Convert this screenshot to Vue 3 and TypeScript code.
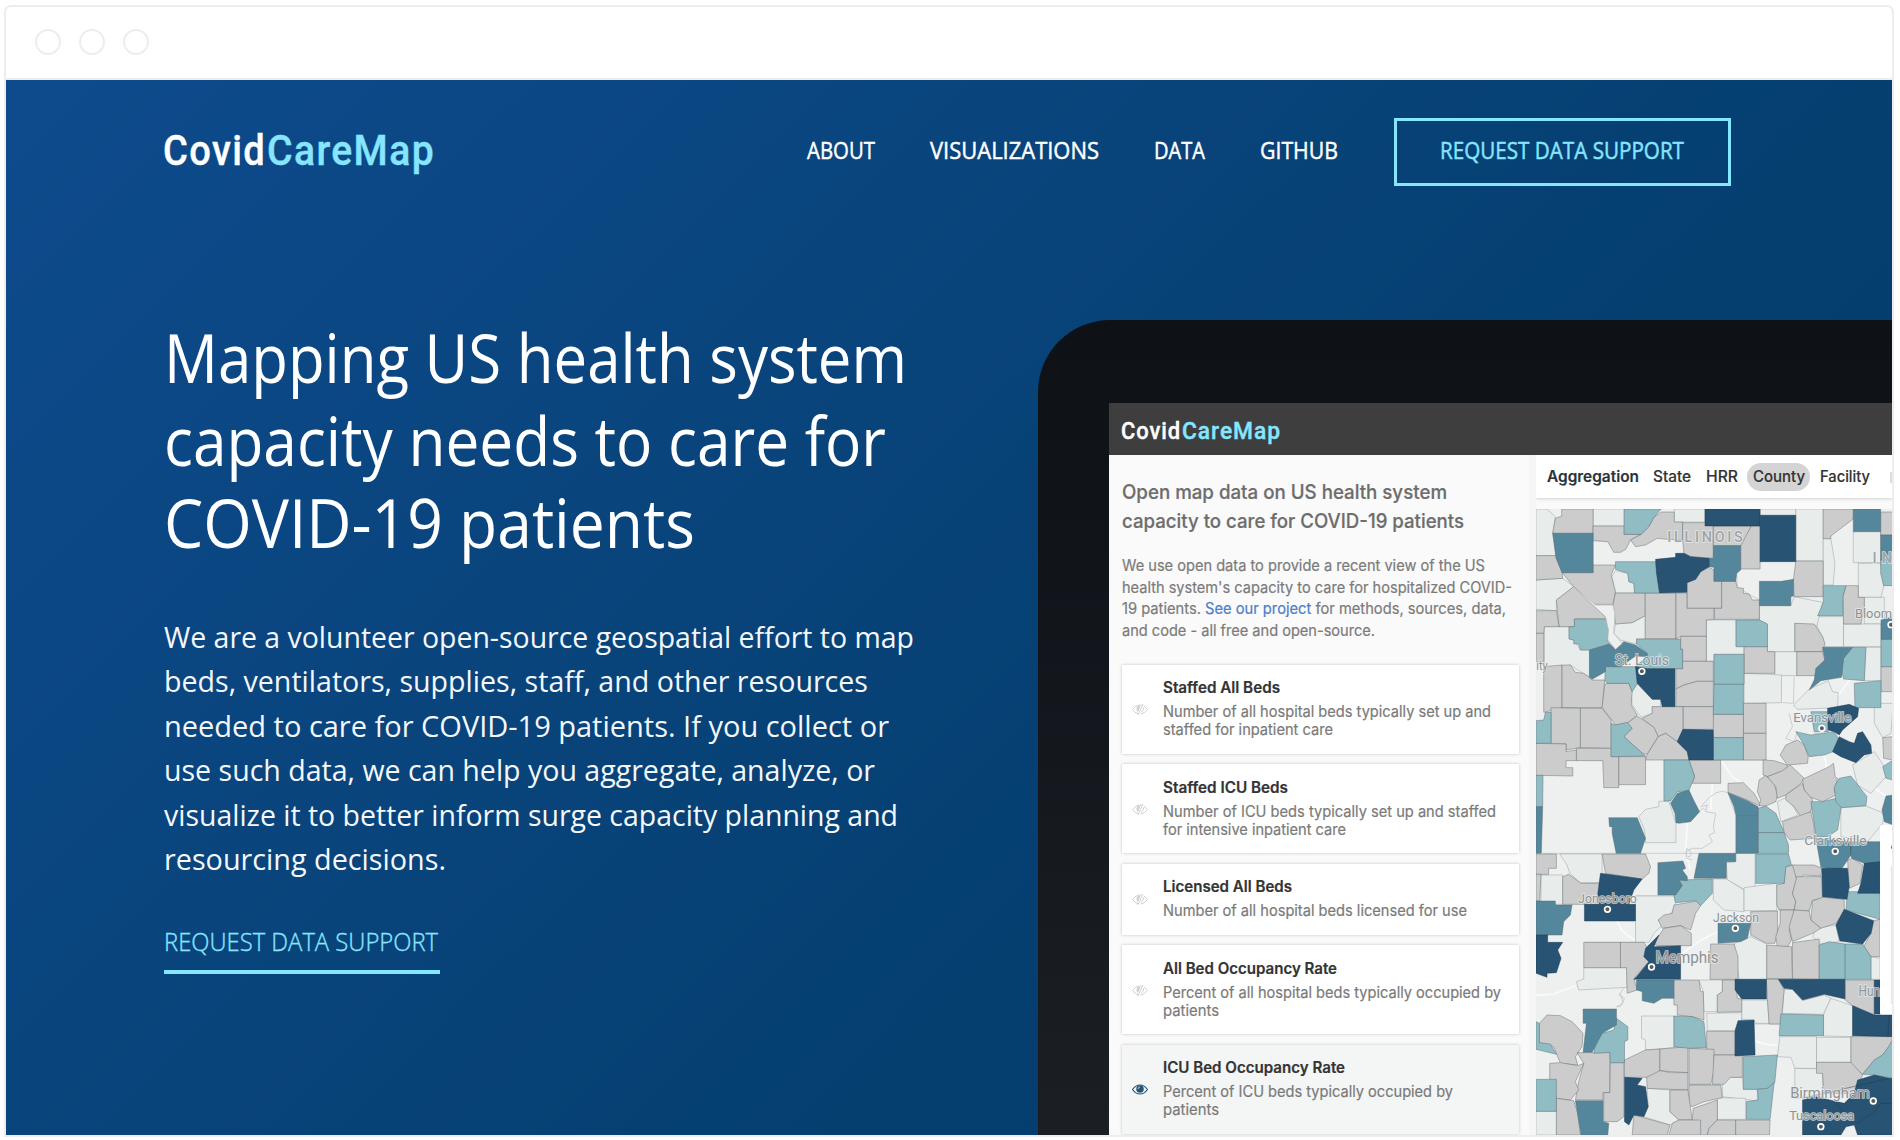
<script setup lang="ts">
import type { Directive } from 'vue'

/** Condenses or widens a run of text so that it occupies the given width in pixels. */
const vFit: Directive<HTMLElement, number> = {
  mounted(el, { value }) {
    const natural = el.getBoundingClientRect().width
    el.style.width = `${value}px`
    el.style.transform = `scaleX(${value / natural})`
  },
}

interface Line { text: string; width: number }
interface Metric { title: Line; lines: Line[]; active?: boolean }

const nav: Line[] = [
  { text: 'ABOUT', width: 68 },
  { text: 'VISUALIZATIONS', width: 169 },
  { text: 'DATA', width: 51 },
  { text: 'GITHUB', width: 78 },
]

const headline: Line[] = [
  { text: 'Mapping US health system', width: 743 },
  { text: 'capacity needs to care for', width: 722 },
  { text: 'COVID-19 patients', width: 531 },
]

const intro: Line[] = [
  { text: 'We are a volunteer open-source geospatial effort to map', width: 750 },
  { text: 'beds, ventilators, supplies, staff, and other resources', width: 704 },
  { text: 'needed to care for COVID-19 patients. If you collect or', width: 725 },
  { text: 'use such data, we can help you aggregate, analyze, or', width: 711 },
  { text: 'visualize it to better inform surge capacity planning and', width: 734 },
  { text: 'resourcing decisions.', width: 282 },
]

const metrics: Metric[] = [
  {
    title: { text: 'Staffed All Beds', width: 117 },
    lines: [
      { text: 'Number of all hospital beds typically set up and', width: 328 },
      { text: 'staffed for inpatient care', width: 170 },
    ],
  },
  {
    title: { text: 'Staffed ICU Beds', width: 125 },
    lines: [
      { text: 'Number of ICU beds typically set up and staffed', width: 333 },
      { text: 'for intensive inpatient care', width: 183 },
    ],
  },
  {
    title: { text: 'Licensed All Beds', width: 129 },
    lines: [{ text: 'Number of all hospital beds licensed for use', width: 304 }],
  },
  {
    title: { text: 'All Bed Occupancy Rate', width: 174 },
    lines: [
      { text: 'Percent of all hospital beds typically occupied by', width: 338 },
      { text: 'patients', width: 56 },
    ],
  },
  {
    title: { text: 'ICU Bed Occupancy Rate', width: 182 },
    lines: [
      { text: 'Percent of ICU beds typically occupied by', width: 290 },
      { text: 'patients', width: 56 },
    ],
    active: true,
  },
]

/* County outlines, grouped by occupancy class. */
const counties: Record<string, string[]> = {
  pale: [
    '218,207 311,207 311,258 218,258', '461,207 553,207 553,246 461,246', '718,207 825,207 825,226 718,226',
    '825,207 907,207 907,363 825,363', '997,275 1079,275 1079,368 997,368', '907,296 930,296 942,370 937,435 907,435',
    '1012,370 1079,370 1088,440 1080,472 1012,472', '47,207 80,207 105,230 97,280 107,347 47,347',
    '47,420 127,415 160,440 108,480 108,512 47,508', '1030,472 1090,472 1090,552 1030,552',
    '557,540 646,540 646,620 670,620 670,643 580,643 580,664 557,664', '374,527 374,597 348,597 348,612 300,600 280,580 285,552 335,548',
    '72,560 146,560 146,597 160,600 180,630 207,630 207,710 180,695 150,675 72,690', '762,635 828,635 828,707 762,707',
    '890,530 968,530 968,620 912,620 905,590 888,558', '968,552 1080,552 1080,620 968,620', '1035,622 1080,622 1080,722 1030,722',
    '670,700 782,705 782,788 670,790', '345,725 395,778 420,778 420,800 395,800 395,820 362,832 335,795 332,755',
    '415,1084 445,1084 466,1150 466,1208 375,1208 372,1170 355,1130 375,1108 415,1100',
    '770,1085 800,1070 832,1125 780,1145', '865,748 922,722 935,755 952,758 950,803 830,808 818,795',
    '1060,790 1116,790 1110,880 1085,893 1060,850', '995,975 1060,935 1090,980 1095,1010 1050,1060 1010,1035',
    '960,1103 1035,1098 1090,1120 1085,1150 1040,1205 960,1190', '118,1242 245,1242 245,1328 180,1328 148,1300 140,1275',
    '62,1305 127,1305 127,1393 62,1393', '645,1240 703,1240 703,1340 673,1350 620,1320 617,1268 645,1265',
    '578,1317 617,1317 670,1350 670,1415 610,1410 578,1380', '670,1343 768,1330 768,1412 670,1412',
    '345,1368 460,1368 465,1390 450,1425 412,1440 425,1455 400,1480 385,1507 345,1507',
    '190,1583 320,1583 320,1642 175,1650 168,1625 190,1617', '640,1510 690,1490 737,1512 737,1618 655,1618',
    '885,1465 945,1455 955,1505 900,1512 875,1490', '1050,1550 1077,1555 1077,1618 1050,1618',
    '535,1620 605,1620 605,1655 590,1665 590,1715 550,1715 548,1655', '790,1648 815,1648 845,1682 910,1665 930,1675 908,1723 785,1720',
    '663,1680 740,1680 745,1750 703,1750 700,1740 663,1738', '930,1675 995,1697 995,1790 908,1788 908,1723',
    '777,1790 887,1790 887,1885 822,1885 810,1852 770,1850', '887,1792 990,1792 990,1867 887,1867',
    '822,1885 905,1887 905,1970 822,1975', '558,1720 663,1718 663,1740 640,1772 560,1772',
    '363,1728 460,1728 460,1823 375,1830 375,1800 363,1795', '47,2014 108,2014 108,2085 47,2085',
    '605,1935 622,1912 665,1912 668,1948 710,1948 710,1983 605,1970', '590,1973 675,1975 675,2038 590,2038',
    '285,392 322,400 325,425 340,430 342,459 285,459 274,410', '716,497 810,497 820,470 905,487 888,558 822,550 822,635 740,635 740,552 716,540',
    '380,1945 448,1950 448,2015 475,2040 448,2055 370,2030 383,2000',
  ],
  grey: [
    '124,207 218,207 218,280 97,280 105,235 124,228',
    '218,258 311,258 311,283 362,283 330,300 316,328 300,337 280,337 262,305 218,302',
    '422,216 461,216 461,246 486,246 486,300 440,298 410,295 375,315 345,320 330,300 362,283 385,260 400,232',
    '486,248 578,248 578,355 510,350 490,340 486,300', '578,258 692,258 665,317 578,317', '692,258 718,258 718,387 660,387 660,317',
    '907,207 997,207 997,237 960,265 930,288 930,296 907,296', '1079,216 1116,216 1116,285 1079,285',
    '47,347 107,347 125,398 127,415 47,420', '218,375 285,375 272,405 285,455 278,493 215,493 160,440 125,398 218,398',
    '160,440 215,493 258,535 258,537 162,537 162,560 116,560 108,480', '47,512 108,512 116,560 72,560 70,580 47,580',
    '565,382 580,390 580,424 603,424 603,505 499,505 499,428 525,418 540,395',
    '603,424 645,424 650,443 668,445 668,460 685,462 695,480 716,480 716,538 580,538 580,505 603,505',
    '825,363 907,363 907,470 820,470 818,418', '975,437 1012,437 1012,472 1030,472 1030,500 1020,552 968,552 966,470',
    '285,459 374,459 374,527 335,548 285,552 278,493', '374,459 466,459 466,597 374,597',
    '466,459 499,459 499,505 580,505 580,538 557,540 557,589 480,589 466,597', '47,580 70,580 70,665 47,665',
    '480,589 557,589 557,664 486,664 486,628 480,628', '670,620 740,620 740,635 762,635 762,700 670,700',
    '822,550 880,552 905,590 912,610 905,635 822,635', '828,635 905,635 912,660 895,680 885,707 828,707',
    '1080,680 1116,680 1116,755 1080,755', '466,686 486,686 486,664 578,664 578,724 530,724 490,735 466,747',
    '466,747 490,735 530,724 578,724 578,800 466,800', '70,680 125,675 125,803 70,817',
    '125,675 150,675 165,697 190,700 215,720 253,720 245,803 125,803',
    '253,733 260,730 325,730 335,755 332,795 350,825 320,850 285,855 270,835 245,803',
    '668,790 736,790 736,880 668,880', '668,880 736,880 736,960 668,960', '578,823 668,823 668,893 580,893 573,868',
    '487,800 578,800 578,868 487,868', '395,800 487,800 487,868 470,905 435,880 413,890 400,862 365,835 395,820',
    '350,828 400,862 413,890 380,943 365,940 310,890 335,865 320,850', '413,890 435,880 470,905 500,935 505,960 375,960 380,943',
    '92,803 180,805 180,923 137,930 137,912 92,910', '180,805 245,805 272,840 272,925 180,923',
    '47,910 137,912 137,935 168,930 168,962 137,962 137,983 157,983 157,1008 47,1006',
    '168,925 272,925 272,950 295,950 295,1043 250,1043 247,962 168,962', '295,950 375,950 375,1034 295,1034',
    '505,960 600,960 600,1030 515,1030 522,1010', '622,1030 668,1028 700,1060 720,1095 715,1097 680,1080 622,1058',
    '727,960 760,962 800,975 795,990 740,1010 727,1005', '710,1055 715,1020 735,1007 760,1030 770,1065 765,1085 735,1098 715,1097 720,1080',
    '740,1010 785,992 808,975 850,1015 840,1030 795,1065 770,1075 765,1040',
    '845,1018 925,980 938,970 943,1010 950,1015 940,1050 945,1065 905,1085 865,1070 850,1050',
    '795,1065 845,1030 850,1050 875,1078 870,1115 840,1130 820,1100 795,1080', '785,1145 870,1115 880,1160 880,1195 808,1200 790,1178',
    '778,945 795,915 830,900 850,915 862,950 860,970 800,975', '1085,893 1116,890 1116,960 1088,955',
    '47,1242 108,1242 108,1285 85,1285 85,1303 47,1303', '245,1242 375,1242 390,1280 385,1300 365,1317 255,1300',
    '127,1310 145,1303 182,1330 240,1330 232,1393 127,1393', '47,1303 62,1303 58,1383 47,1383',
    '795,1280 820,1275 828,1320 815,1360 825,1385 820,1410 775,1410 768,1395 768,1335 790,1330',
    '815,1275 880,1275 903,1285 900,1308 850,1305 828,1320', '828,1310 903,1310 905,1375 875,1380 865,1413 820,1410 825,1385 815,1360',
    '980,1260 995,1255 1025,1275 1018,1330 985,1345', '875,1383 905,1372 970,1378 970,1413 945,1450 900,1465 870,1440',
    '1058,1442 1077,1438 1077,1550 1050,1550 1028,1520 1050,1480', '430,1425 455,1420 460,1395 530,1383 540,1397 525,1420 510,1470 480,1457 425,1465 413,1440',
    '400,1510 430,1465 480,1457 512,1480 512,1517 410,1517', '190,1507 300,1507 300,1583 190,1583',
    '300,1507 370,1507 385,1530 370,1550 385,1565 340,1615 350,1650 320,1660 318,1583 300,1583',
    '570,1512 640,1512 652,1550 652,1618 568,1618', '690,1415 770,1413 770,1480 762,1510 737,1510 690,1485',
    '778,1410 820,1410 815,1440 805,1470 812,1500 800,1520 770,1522 765,1490 778,1450',
    '820,1410 865,1413 870,1440 900,1465 875,1480 815,1505 805,1460', '738,1515 812,1520 815,1616 738,1616',
    '815,1508 895,1497 895,1618 815,1616', '460,1620 535,1620 540,1655 548,1655 550,1740 515,1730 470,1725 470,1695 460,1695',
    '605,1620 645,1620 650,1675 663,1678 663,1715 590,1717 590,1665 605,1655', '737,1618 773,1618 790,1650 780,1752 745,1752 740,1677',
    '973,1620 1060,1620 1060,1725 995,1697 973,1680', '990,1790 1116,1790 1105,1820 1085,1845 1060,1860 1025,1903 990,1875',
    '887,1867 990,1867 1025,1905 1000,1960 910,1960 905,1900 887,1900', '558,1774 643,1774 643,1845 558,1845',
    '80,1725 120,1727 155,1745 188,1780 185,1820 165,1850 172,1875 120,1870 100,1820 57,1808 57,1750',
    '170,1838 268,1838 268,1958 248,1958 248,1980 165,1980 175,1925 190,1870', '88,1870 120,1868 172,1877 190,1870 165,1925 175,1950 150,1980 108,1975 88,1915',
    '108,1975 160,1982 172,2020 180,2085 108,2085', '270,1868 310,1868 310,2030 290,2045 250,2045 250,1958 268,1958',
    '312,1860 375,1830 418,1827 418,1912 312,1912', '418,1827 502,1820 502,1898 450,1895 418,1892',
    '378,1912 418,1892 450,1898 502,1898 502,1950 380,1945', '505,1825 580,1828 580,1895 570,1933 505,1933',
    '580,1845 665,1845 665,1912 630,1912 610,1933 575,1933', '505,1935 600,1935 605,1973 550,1985 515,2000 505,1995',
    '448,1950 502,1950 515,2040 475,2040 448,2015', '515,2040 518,2005 590,1980 590,2040 565,2065 560,2085 540,2085',
    '340,2025 448,2055 440,2085 335,2085', '455,2050 475,2040 540,2040 540,2085 445,2085',
    '565,2065 590,2040 645,2040 645,2085 560,2085', '645,2040 748,2040 746,2085 645,2085',
  ],
  teal: [
    '311,207 422,207 400,232 385,260 362,283 311,283', '1079,360 1116,360 1116,437 1088,437 1079,400',
    '285,365 405,365 417,459 342,459 340,430 325,425 322,400 285,388', '907,437 975,437 966,470 966,527 890,527 900,505 907,487',
    '646,540 716,540 740,552 740,620 646,620',
    '162,537 258,537 268,575 260,600 268,612 207,630 180,630 175,612 160,612 160,600 146,597 146,560 162,560',
    '348,597 480,597 480,628 486,628 486,686 380,686 345,680 380,650 380,640 348,612', '580,643 670,643 670,733 580,733',
    '1080,598 1116,598 1116,680 1080,680', '995,622 1035,622 1030,722 968,717 962,690 968,655',
    '255,680 345,680 355,725 335,755 325,730 260,730 253,720', '580,733 668,733 668,823 578,823', '578,893 668,893 668,960 578,960',
    '272,850 285,855 320,847 335,865 310,890 375,948 272,950', '47,842 70,840 75,817 92,817 92,910 47,910',
    '430,960 505,960 522,1010 505,1052 470,1055 450,1083 430,1083', '47,1006 68,1006 67,1100 47,1100',
    '712,1105 735,1098 765,1120 785,1165 790,1178 712,1178', '712,1178 790,1178 803,1215 803,1240 712,1240',
    '870,1085 905,1085 945,1075 962,1095 950,1170 920,1190 885,1190 880,1150', '940,1040 955,1015 990,1008 1038,1070 1035,1097 962,1103 945,1085',
    '825,875 870,885 940,875 955,900 950,930 910,945 865,950 850,915', '870,815 922,815 922,875 880,875',
    '1000,730 1080,722 1080,803 1002,803', '1085,980 1116,960 1116,1020 1095,1015', '705,1242 803,1242 812,1275 795,1280 790,1330 705,1330',
    '475,1320 575,1317 575,1360 540,1397 525,1382 465,1388 460,1365 485,1335', '980,1355 1077,1355 1077,1438 975,1410',
    '895,1515 925,1505 973,1512 973,1618 895,1618', '973,1512 1025,1512 1050,1550 1050,1618 973,1618',
    '780,1722 908,1725 908,1787 775,1787', '1025,1903 1060,1860 1085,1845 1116,1800 1116,1915 1060,1905',
    '460,1728 515,1730 550,1745 557,1823 505,1825 460,1820', '288,1735 322,1760 322,1800 312,1805 312,1868 270,1868 268,1837 220,1840 225,1810 245,1780 280,1770',
    '47,1745 57,1750 57,1808 90,1812 108,1843 47,1828', '47,1918 108,1918 108,2014 47,2014',
    '668,1850 770,1845 762,1928 740,1945 710,1948 668,1948', '710,1948 740,1945 760,1928 748,2038 677,2038 677,1985 712,1980',
  ],
  mid: [
    '997,207 1079,207 1079,275 997,275', '1079,285 1116,285 1116,360 1079,360', '97,280 218,280 218,398 125,398 107,355',
    '578,317 660,317 660,390 648,400 645,424 580,424 580,382 565,380 565,355 578,355', '716,424 782,424 818,418 818,468 810,470 810,497 716,497',
    '1080,540 1116,530 1116,598 1080,598', '207,630 268,612 285,628 310,605 345,615 380,640 380,650 345,648 300,680 255,680 255,695 215,718 207,712',
    '905,622 995,622 968,655 962,712 900,722 865,750 880,720 885,685 912,660',
    '450,1090 470,1060 505,1050 520,1082 537,1115 510,1145 475,1150 466,1148 463,1120', '47,1100 67,1100 63,1240 47,1240',
    '265,1133 350,1133 375,1195 360,1240 287,1240 275,1180 275,1160 267,1160', '622,1058 680,1082 712,1100 712,1127 646,1127 640,1100',
    '646,1127 712,1127 712,1240 646,1240', '1095,1068 1116,1065 1116,1155 1090,1145 1083,1110',
    '885,1195 990,1205 990,1245 960,1290 900,1282', '990,1205 1077,1205 1077,1265 1055,1280 992,1255',
    '412,1268 487,1263 495,1285 485,1290 500,1310 500,1322 475,1320 485,1337 465,1365 412,1365', '535,1240 645,1240 645,1265 617,1265 617,1315 520,1315',
    '47,1383 105,1383 105,1395 155,1395 150,1425 130,1445 125,1485 47,1485', '348,1620 460,1620 460,1675 425,1675 400,1690 365,1682 365,1655 348,1650',
    '592,1450 690,1450 680,1495 660,1505 592,1510', '188,1707 288,1707 288,1755 245,1780 215,1837 188,1837 198,1750 188,1750',
    '165,1982 248,1982 248,2045 265,2050 262,2085 182,2085',
  ],
  dark: [
    '553,207 718,207 718,258 553,258', '718,226 825,226 825,365 718,365',
    '405,358 465,352 465,340 490,340 510,350 565,355 565,380 540,395 525,418 499,428 499,457 417,459 408,400',
    '345,680 380,686 463,686 463,800 425,800 420,778 395,778 350,730', '487,868 578,870 578,960 505,960 500,935 470,905',
    '920,805 985,793 1013,805 1010,830 965,870 955,885 940,875 922,870',
    '955,890 985,905 1000,910 1010,880 1025,875 1050,915 1052,940 1030,945 1005,968 960,950 935,935',
    '240,1300 365,1317 340,1350 325,1393 235,1393 232,1360', '192,1393 345,1393 345,1443 192,1443',
    '903,1285 980,1285 985,1340 978,1378 905,1370', '1030,1270 1077,1265 1077,1360 1010,1360 1020,1330',
    '970,1408 1058,1442 1050,1480 1025,1512 957,1503 945,1455',
    '47,1485 82,1485 82,1507 127,1507 112,1530 122,1555 108,1598 80,1600 80,1612 47,1600',
    '375,1525 415,1485 400,1520 480,1517 480,1618 340,1618 350,1608 385,1565 370,1550', '643,1618 737,1618 737,1677 663,1677 643,1650',
    '773,1618 972,1618 972,1677 910,1663 845,1680 815,1648 790,1645', '1060,1620 1077,1620 1077,1722 1060,1722',
    '995,1697 1060,1725 1116,1725 1116,1790 995,1787', '845,1980 885,1970 970,1990 1000,1960 1010,1920 1060,1905 1105,1915 1116,1915 1116,2085 1010,2085 1000,2055 975,2060 960,2085 845,2085',
    '643,1772 652,1742 700,1740 703,1845 643,1848', '312,1912 365,1915 350,1935 375,1940 383,2000 370,2030 340,2025 325,2055 312,2045',
  ],
}

interface Place { name: string; x: number; y: number; width: number; size: number; kind?: string; dot?: [number, number] }

const places: Place[] = [
  { name: 'ILLINOIS', x: 440, y: 306, width: 226, size: 43, kind: 'region' },
  { name: 'IN', x: 1055, y: 370, width: 58, size: 43, kind: 'region' },
  { name: 'Bloom', x: 1002, y: 535, width: 111, size: 39, dot: [1110, 554] },
  { name: 'ity', x: 48, y: 690, width: 34, size: 39 },
  { name: 'St. Louis', x: 283, y: 675, width: 162, size: 43, dot: [364, 694] },
  { name: 'Evansville', x: 817, y: 846, width: 174, size: 40, dot: [903, 865] },
  { name: 'Clarksville', x: 850, y: 1216, width: 187, size: 40, dot: [943, 1234] },
  { name: 'Jonesboro', x: 173, y: 1390, width: 176, size: 40, dot: [261, 1408] },
  { name: 'Jackson', x: 577, y: 1446, width: 138, size: 40, dot: [644, 1465] },
  { name: 'Memphis', x: 405, y: 1568, width: 189, size: 47, dot: [393, 1581] },
  { name: 'Hun', x: 1013, y: 1667, width: 64, size: 42 },
  { name: 'Birmingham', x: 808, y: 1973, width: 238, size: 44, dot: [1057, 1983] },
  { name: 'Tuscaloosa', x: 805, y: 2041, width: 195, size: 41, dot: [900, 2060] },
]

const roads: string[] = [
  'M47 1666 L100 1662 L165 1637', 'M480 1545 Q540 1495 592 1475', 'M290 1443 Q300 1480 345 1500', 'M600 960 L635 1010 L690 1050 L718 1090',
  'M575 1030 L570 1110', 'M500 1150 L495 1240 L510 1290', 'M716 560 L770 530 L820 500 L905 487', 'M703 1802 Q730 1815 770 1815',
  'M72 640 Q110 620 150 640 T207 640', 'M950 770 L985 720', 'M900 935 Q920 960 915 985', 'M1050 1035 L1116 1085',
]

const rivers: string[] = [
  'M540 1100 L560 1095 L555 1115 L585 1120 L578 1160 L582 1178 L565 1185 L575 1205 L545 1225 L515 1225 L495 1235 L498 1255 L515 1260',
  'M537 1115 Q545 1100 555 1110 M545 1095 Q590 1040 622 1058 L645 1127 V1240',
  'M785 788 L818 790 L820 710 M805 820 L815 860 L795 895 L820 905 L830 875',
  'M310 1645 L295 1665 L312 1675 L300 1700 L288 1700 L308 1690 L300 1660',
  'M498 1225 q20 10 10 25 q-15 5 -10 -25 M880 880 q25 -5 8 18 q-15 2 -10 -12',
  'M505 960 H727 M67 1240 H535 M345 1368 H460 M192 1507 H345 M703 1752 H780 M218 302 V375 M660 387 L648 400 L650 443 L716 480 M907 363 V437',
]
</script>

<template>
  <div class="window">
    <div class="titlebar"><i></i><i></i><i></i></div>
    <div class="hero">
      <header class="nav">
        <div class="logo"><b v-fit="103">Covid</b><b v-fit="168" class="aqua">CareMap</b></div>
        <nav class="links">
          <a v-for="item in nav" :key="item.text"><span v-fit="item.width">{{ item.text }}</span></a>
          <a class="button"><span v-fit="244">REQUEST DATA SUPPORT</span></a>
        </nav>
      </header>

      <div class="body">
        <section class="copy">
          <h1><span v-for="l in headline" :key="l.text"><span v-fit="l.width">{{ l.text }}</span></span></h1>
          <p><span v-for="l in intro" :key="l.text"><span v-fit="l.width">{{ l.text }}</span></span></p>
          <a class="cta"><span v-fit="274">REQUEST DATA SUPPORT</span></a>
        </section>

        <section class="device">
          <div class="screen">
            <div class="appbar"><b v-fit="60">Covid</b><b v-fit="99" class="aqua">CareMap</b></div>
            <div class="panes">
              <aside class="sidebar">
                <h2>
                  <span><span v-fit="325">Open map data on US health system</span></span>
                  <span><span v-fit="342">capacity to care for COVID-19 patients</span></span>
                </h2>
                <p class="about">
                  <span><span v-fit="363">We use open data to provide a recent view of the US</span></span>
                  <span><span v-fit="390">health system's capacity to care for hospitalized COVID-</span></span>
                  <span><span v-fit="384">19 patients. <a>See our project</a> for methods, sources, data,</span></span>
                  <span><span v-fit="253">and code - all free and open-source.</span></span>
                </p>
                <div class="cards">
                  <article v-for="m in metrics" :key="m.title.text" class="card" :class="{ active: m.active }">
                    <svg v-if="m.active" class="eye" viewBox="0 0 32 22">
                      <path d="M1 11 Q7 2 16 2 T31 11 Q25 20 16 20 T1 11Z" fill="none" stroke="currentColor" stroke-width="2.2" />
                      <circle cx="16" cy="10" r="7.5" fill="currentColor" />
                      <path d="M12 10 A4 4 0 0 1 16 6" fill="none" stroke="#dfe9ef" stroke-width="1.6" />
                    </svg>
                    <svg v-else class="eye" viewBox="0 0 32 22">
                      <path d="M12 19.5 Q5 17.5 1 11 Q7 2 16 2 L19 2.3 M24 4.5 Q28 7 31 11 Q26 18.5 17 20" fill="none" stroke="currentColor" stroke-width="2" />
                      <path d="M17 3.5 Q9 3 9 10 Q9 14 12 16Z" fill="currentColor" />
                      <path d="M22 0 L11.5 22 M23 7 Q24 13 18 16.5" fill="none" stroke="currentColor" stroke-width="2" />
                    </svg>
                    <div class="info">
                      <h3><span v-fit="m.title.width">{{ m.title.text }}</span></h3>
                      <div v-for="l in m.lines" :key="l.text"><span v-fit="l.width">{{ l.text }}</span></div>
                    </div>
                  </article>
                </div>
              </aside>

              <div class="mapside">
                <div class="tabs">
                  <strong><span v-fit="92">Aggregation</span></strong>
                  <em><span v-fit="38">State</span></em>
                  <em><span v-fit="32">HRR</span></em>
                  <em class="on"><span v-fit="52">County</span></em>
                  <em><span v-fit="50">Facility</span></em>
                  <i></i>
                </div>
                <svg class="map" viewBox="47 207 1069 1878" preserveAspectRatio="none">
                  <rect x="47" y="207" width="1069" height="1878" fill="#eef0f0" />
                  <g class="roads"><path v-for="d in roads" :key="d" :d="d" /></g>
                  <g class="rivers"><path v-for="d in rivers" :key="d" :d="d" /></g>
                  <g v-for="(shapes, level) in counties" :key="level" :class="['county', level]">
                    <polygon v-for="s in shapes" :key="s" :points="s" />
                  </g>
                  <path class="seam" d="M990 1205 V1250 M1105 1725 L1100 1790 M845 1975 L1105 1915 M940 1985 L970 2018 L1010 2050 L1060 2015 L1080 1990 L1116 1990" />
                  <path d="M160 440 L215 493 L255 530 L264 570 L262 598 L285 628 L305 610 L280 580 L283 520 L278 495 L225 495Z" fill="#eef0f0" stroke="#b3b7b8" stroke-width="2" />
                  <g v-for="p in places" :key="p.name">
                    <text :class="['place', p.kind]" :x="p.x" :y="p.y" :font-size="p.size" :textLength="p.width" :lengthAdjust="p.kind ? 'spacing' : 'spacingAndGlyphs'">{{ p.name }}</text>
                    <circle v-if="p.dot" class="dot" :cx="p.dot[0]" :cy="p.dot[1]" r="8.5" />
                  </g>
                  <rect x="1077" y="1155" width="60" height="568" rx="6" fill="#fff" />
                  <circle cx="1119" cy="1222" r="8" fill="#333" />
                  <path d="M1111 1278 V1690 H1118" fill="none" stroke="#e2e2e2" stroke-width="3" />
                </svg>
              </div>
            </div>
          </div>
        </section>
      </div>
    </div>
  </div>
</template>

<style>
html, body { background: #fff; overflow: hidden; }
</style>

<style scoped>
* { box-sizing: border-box; }
h1, h2, h3, p { margin: 0; font-weight: 400; }
.window {
  width: 1890px; height: 1132px; margin: 5px 0 0 4px; overflow: hidden;
  border: 2px solid #ededed; border-radius: 7px 7px 0 0; background: #fff;
}
.titlebar {
  display: flex; gap: 18px; height: 73px; padding: 22px 0 0 29px; border-bottom: 2px solid #ededed;
}
.titlebar i { width: 26px; height: 26px; border: 2px solid #ededed; border-radius: 50%; }
.hero {
  height: 1055px; overflow: hidden; color: #fff; font-family: "Open Sans", "Noto Sans", sans-serif;
  background: linear-gradient(135deg, #0e4b8d 0%, #09447c 36%, #053f70 65%, #043a66 100%);
}
.logo b, .appbar b, .links span, h1 span span, p span span, .cta span, h2 span span, .info span, .tabs span {
  display: inline-block; white-space: nowrap; transform-origin: 0 50%;
}
.nav { display: flex; justify-content: space-between; height: 106px; padding: 38px 161px 0 157px; }
.logo { display: flex; gap: 1px; font: 500 42.5px/66px Roboto, sans-serif; letter-spacing: 1.5px; }
.logo b, .appbar b { font-weight: 500; -webkit-text-stroke: .4px currentColor; }
.aqua { color: #86e5ff; }
.links {
  display: flex; align-items: center; height: 68px; font-size: 22.9px; line-height: 30px;
  -webkit-text-stroke: .45px currentColor;
}
.links a { display: flex; margin: -2px 55px 0 0; }
.links a:nth-last-child(2) { margin-right: 56px; }
.links .button {
  width: 337px; height: 68px; margin: 0; padding-bottom: 1.5px; align-items: center; justify-content: center;
  border: 3.5px solid #86e5ff; color: #86e5ff;
}
.button span { margin-left: -2px; }
.body { display: flex; }
.copy { flex: none; width: 1032px; padding: 130px 0 0 158px; }
h1 > span, .copy p > span, h2 > span, .about > span { display: block; }
h1 { font-size: 68px; line-height: 82.5px; }
.copy p { margin-top: 51px; font-size: 28.8px; line-height: 44.5px; color: #f4f8fc; }
.copy p > span, h1 > span { height: 1lh; }
.cta {
  display: block; width: 275.5px; margin-top: 42px; padding-bottom: 10px; border-bottom: 4px solid #86e5ff;
  font-size: 25.7px; font-weight: 300; line-height: 36px; color: #86e5ff; -webkit-text-stroke: .35px currentColor;
}
.cta span { display: block; width: max-content; }
.device {
  flex: none; width: 1000px; height: 900px; margin-top: 134px; padding: 83px 0 0 71px;
  border-radius: 72px 0 0 0; background: linear-gradient(#0e1216, #12161c 35%, #1d2024);
}
.screen { width: 783.5px; background: #fafafa; font-family: Inter, "Liberation Sans", sans-serif; }
.appbar {
  display: flex; gap: 1px; height: 51.5px; padding-left: 12px; background: #3e3e3e;
  font: 500 24.5px/55px Roboto, sans-serif; letter-spacing: 1px;
}
.panes { display: flex; height: 681px; }
.sidebar { width: 426.5px; padding: 23.5px 0 0 12.5px; border-right: 7px solid #f5f5f5; -webkit-text-stroke: .2px currentColor; }
h2 { font-size: 20px; font-weight: 500; line-height: 28.6px; color: #6d6d6d; }
.about { margin-top: 20.2px; font-size: 15.2px; line-height: 21.45px; color: #7b7b7b; }
.about > span { height: 21.45px; }
h2 > span { height: 28.6px; }
.about a { color: #4a80c9; }
.cards { display: flex; flex-direction: column; gap: 10.3px; margin-top: 23.4px; }
.card {
  display: flex; align-items: center; width: 397px; min-height: 71px; padding: 18.6px 0 14.1px 10px;
  background: #fff; box-shadow: 0 0 3px rgba(0, 0, 0, .22);
}
.card.active { background: #f4f6f6; }
.eye { flex: none; width: 16px; height: 11px; margin: -3px 15px 0 0; color: #cfcfcf; }
.active .eye { color: #265577; }
.info { height: 100%; font-size: 15.2px; line-height: 18.6px; color: #7a7a7a; }
.info div { height: 18.3px; }
h3 { height: 20px; font-size: 15.3px; font-weight: 600; line-height: 10.5px; color: #333; }
.mapside { flex: 1; overflow: hidden; }
.tabs {
  display: flex; align-items: center; height: 43px; padding: 2px 0 0 11px; background: #fff;
  box-shadow: 0 0 4px rgba(0, 0, 0, .25); clip-path: inset(0 0 -6px -6px); font-size: 15.3px; line-height: 20px; color: #333;
  -webkit-text-stroke: .15px currentColor;
}
.tabs strong { margin-right: 14.5px; font-weight: 600; color: #2a333a; }
.tabs em { flex: none; margin-right: 15px; font-style: normal; font-weight: 500; }
.tabs .on { margin: 0 10px 0 -6.5px; padding: 4px 5px 4px 6px; border-radius: 15px; background: #d4d4d4; }
.tabs i { width: 3px; height: 11px; margin-left: 5px; background: #ddd; }
.map { display: block; width: 357px; height: 626px; margin-top: 11.5px; }
.county { stroke: #59666c; stroke-opacity: .6; stroke-width: 2.2; stroke-linejoin: round; }
.pale { fill: #e8edec; stroke: #8c9597; }
.grey { fill: #ccc; }
.teal { fill: #90bcc4; }
.mid { fill: #54879b; }
.dark { fill: #285373; stroke: #1c3a50; }
.roads { fill: none; stroke: #fafafa; stroke-width: 5; }
.rivers { fill: none; stroke: #c3c7c8; stroke-width: 2.5; }
.seam { fill: none; stroke: #1c3a50; stroke-width: 2; opacity: .7; }
.place {
  font-family: Roboto, sans-serif; font-weight: 400; fill: #8d9294;
  stroke: #edf0f0; stroke-opacity: .75; stroke-width: 5; paint-order: stroke;
}
.region { font-weight: 500; fill: #a0a4a6; }
.dot { fill: #555b5e; stroke: #fff; stroke-width: 5; }
</style>
